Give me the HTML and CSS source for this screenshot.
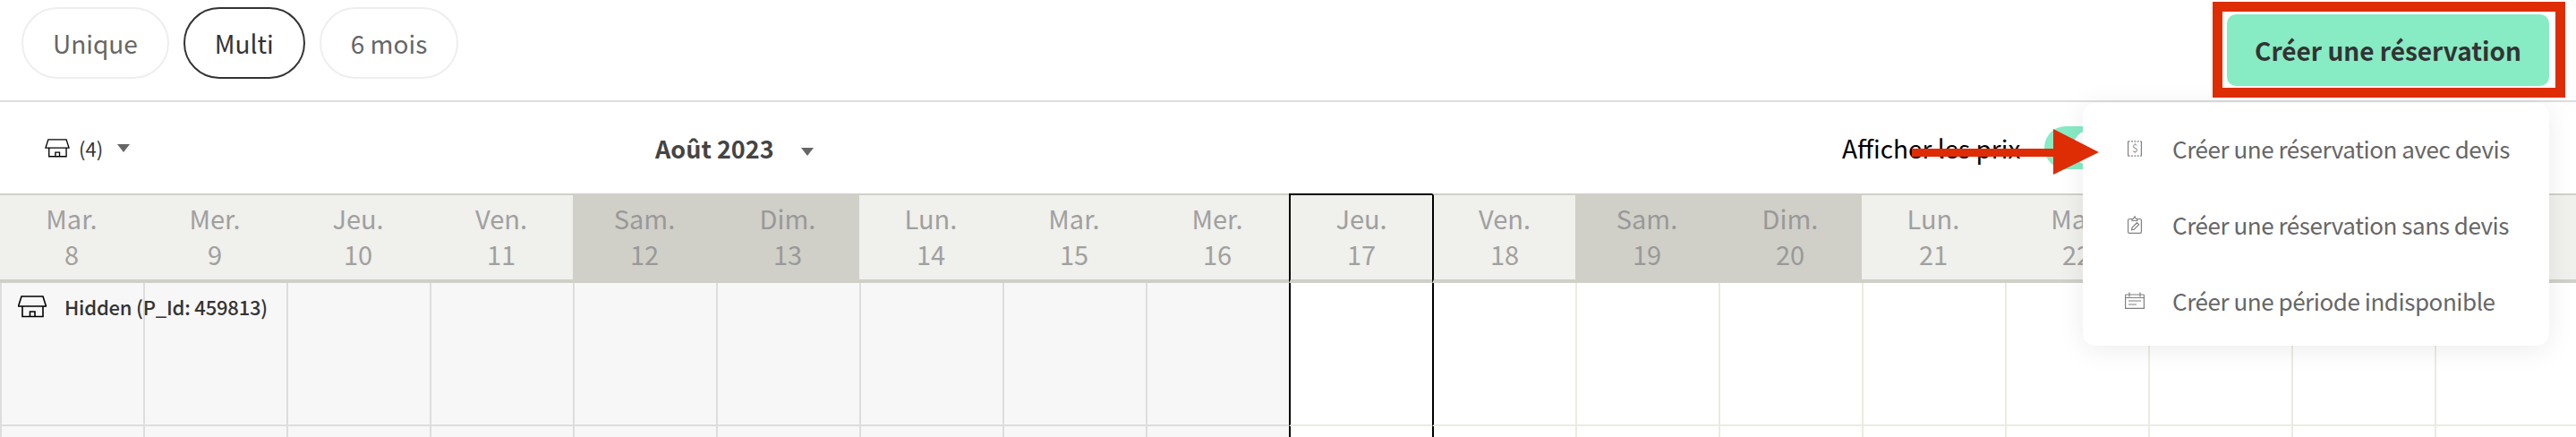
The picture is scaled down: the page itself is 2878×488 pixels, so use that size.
FILE: index.html
```html
<!DOCTYPE html>
<html lang="fr">
<head>
    <meta charset="UTF-8">
    <title>Planning</title>
    <link rel="stylesheet" href="styles.css">
</head>
<body>
    <div id="page">
        <div class="top-bar">
            <div class="pills">
                <span class="pill">Unique</span>
                <span class="pill active">Multi</span>
                <span class="pill">6 mois</span>
            </div>
            <button class="create-btn">Créer une réservation</button>
        </div>

        <div class="tool-bar">
            <div class="tool-left">
                <svg class="store-icon small" viewBox="0 0 32 25"><path d="M4 1h24l3.500 11H.5zM5 12v11.500h23V12M13.500 23.500V18H19v5.500"/></svg>
                <span class="count">(4)</span>
                <span class="caret"></span>
            </div>
            <div class="month">Août 2023<span class="caret"></span></div>
            <div class="prices">
                <span>Afficher les prix</span>
                <span class="toggle"><span class="knob"></span></span>
            </div>
        </div>

        <div class="days">
            <div class="day">Mar.<br>8</div>
            <div class="day">Mer.<br>9</div>
            <div class="day">Jeu.<br>10</div>
            <div class="day">Ven.<br>11</div>
            <div class="day weekend">Sam.<br>12</div>
            <div class="day weekend">Dim.<br>13</div>
            <div class="day">Lun.<br>14</div>
            <div class="day">Mar.<br>15</div>
            <div class="day">Mer.<br>16</div>
            <div class="day today">Jeu.<br>17</div>
            <div class="day after-today">Ven.<br>18</div>
            <div class="day weekend">Sam.<br>19</div>
            <div class="day weekend">Dim.<br>20</div>
            <div class="day">Lun.<br>21</div>
            <div class="day">Mar.<br>22</div>
            <div class="day">Mer.<br>23</div>
            <div class="day">Jeu.<br>24</div>
            <div class="day">Ven.<br>25</div>
        </div>

        <div class="row">
            <div class="cell past">
                <div class="place">
                    <svg class="store-icon" viewBox="0 0 32 25"><path d="M4 1h24l3.500 11H.5zM5 12v11.500h23V12M13.500 23.500V18H19v5.500"/></svg>
                    <span>Hidden (P_Id: 459813)</span>
                </div>
            </div>
            <div class="cell past"></div><div class="cell past"></div><div class="cell past"></div>
            <div class="cell past"></div><div class="cell past"></div><div class="cell past"></div>
            <div class="cell past"></div><div class="cell past"></div>
            <div class="cell today"></div><div class="cell after-today"></div>
            <div class="cell"></div><div class="cell"></div><div class="cell"></div>
            <div class="cell"></div><div class="cell"></div><div class="cell"></div><div class="cell"></div>
        </div>

        <div class="row">
            <div class="cell past"></div><div class="cell past"></div><div class="cell past"></div>
            <div class="cell past"></div><div class="cell past"></div><div class="cell past"></div>
            <div class="cell past"></div><div class="cell past"></div><div class="cell past"></div>
            <div class="cell today"></div><div class="cell after-today"></div>
            <div class="cell"></div><div class="cell"></div><div class="cell"></div>
            <div class="cell"></div><div class="cell"></div><div class="cell"></div><div class="cell"></div>
        </div>

        <div class="menu">
            <div class="menu-item">
                <span class="menu-icon">
                    <svg width="16" height="18" viewBox="0 0 16 18"><path class="dash" d="M.6 .8h14.800M.6 17.200h14.800"/><path d="M.6 .8v16.400M15.400 .8v16.400"/><text x="8" y="13" text-anchor="middle">$</text></svg>
                </span>
                Créer une réservation avec devis
            </div>
            <div class="menu-item">
                <span class="menu-icon">
                    <svg width="16" height="20" viewBox="0 0 16 20"><path d="M5 3.500H2Q.6 3.500 .6 4.900v13.200q0 1.300 1.400 1.300h12q1.400 0 1.400-1.300V4.900q0-1.400-1.400-1.400h-3M5 5.500v-2h1.500L8 .8l1.500 2.700H11v2zM4.500 15.800l.6-2.800 5.400-5.300 2.100 2.100-5.300 5.400z"/></svg>
                </span>
                Créer une réservation sans devis
            </div>
            <div class="menu-item">
                <span class="menu-icon">
                    <svg width="22" height="19" viewBox="0 0 22 19"><path d="M1.400 3h19.200q.8 0 .8.800v14.600H.6V3.800q0-.8.800-.8zM.6 6.500h20.800M5 .4v5M17 .4v5M4 10h14M4 14h9"/></svg>
                </span>
                Créer une période indisponible
            </div>
        </div>

        <!-- annotation -->
        <div class="red-frame"></div>
        <svg class="red-arrow" width="210" height="52" viewBox="0 0 210 52"><path d="M0 22h158V0l51 26-51 25V31H0z"/></svg>
    </div>
</body>
</html>
```

FILE: styles.css
```css
body {
    margin: 0;
    background: white;
    font-family: "Noto Sans CJK SC", "Noto Sans", sans-serif;
    color: #666;
}

#page {
    position: relative;
    width: 2878px;
    height: 488px;
    overflow: hidden;
}

.top-bar {
    display: flex;
    justify-content: space-between;
    height: 112px;
    padding: 8px 30px 0 24px;
    box-sizing: border-box;
}

.pills {
    display: flex;
    gap: 16px;
}

.pill {
    display: flex;
    align-items: center;
    height: 80px;
    padding: 0 33px;
    box-sizing: border-box;
    border: 2px solid #eee;
    border-radius: 40px;
    font-size: 28px;
    color: #666;
}

.pill.active {
    border-color: #333;
    color: #333;
}

.create-btn {
    width: 360px;
    height: 80px;
    margin-top: 8px;
    padding: 0;
    border: 0;
    border-radius: 10px;
    background: #87ebc4;
    font-family: inherit;
    font-size: 28px;
    font-weight: 600;
    color: #333;
}

.tool-bar {
    display: grid;
    grid-template-columns: 732px 1326px 1fr;
    align-items: center;
    height: 104px;
    box-sizing: border-box;
    border-top: 2px solid #ddd;
}

.tool-left {
    display: flex;
    align-items: center;
    padding-left: 50px;
}

.store-icon {
    width: 32px;
    height: 25px;
    flex: none;
    fill: none;
    stroke: black;
    stroke-width: 1.6;
}

.store-icon.small {
    width: 28px;
    height: 21px;
}

.count {
    margin-left: 10px;
    font-size: 22px;
    color: #333;
}

.caret {
    display: inline-block;
    margin-left: 16px;
    border-left: 7px solid transparent;
    border-right: 7px solid transparent;
    border-top: 9px solid #666;
}

.month {
    font-size: 27px;
    font-weight: 700;
    color: #444;
}

.month .caret {
    margin-left: 30px;
    vertical-align: middle;
}

.prices {
    display: flex;
    align-items: center;
    gap: 27px;
    font-size: 28px;
    color: black;
}

.toggle {
    display: flex;
    justify-content: flex-end;
    align-items: center;
    width: 76px;
    height: 48px;
    padding-right: 4px;
    box-sizing: border-box;
    border-radius: 24px;
    background: #87ebc4;
}

.knob {
    width: 40px;
    height: 40px;
    border-radius: 50%;
    background: white;
}

.days,
.row {
    display: grid;
    grid-template-columns: repeat(18, 160px);
}

.day {
    height: 100px;
    box-sizing: border-box;
    padding-top: 5px;
    border-top: 2px solid #d0d0c8;
    border-bottom: 4px solid #d0d0c8;
    background: #f0f0ec;
    font-size: 29px;
    line-height: 40px;
    text-align: center;
    color: #a0a0a0;
}

.day.weekend {
    background: #d0d0c8;
    color: #999;
}

.day.today {
    border-top-color: black;
    border-left: 2px solid black;
}

.day.after-today {
    border-left: 2px solid black;
}

.cell {
    height: 160px;
    box-sizing: border-box;
    border-left: 2px solid #ebebe0;
    border-bottom: 2px solid #ebebe0;
}

.cell.past {
    border-color: #ddd;
    background: #f7f7f7;
}

.cell.today,
.cell.after-today {
    border-left-color: black;
}

.place {
    position: relative;
    z-index: 1;
    display: flex;
    align-items: center;
    gap: 20px;
    width: 300px;
    padding: 10px 0 0 18px;
    font-size: 22px;
    font-weight: 500;
    letter-spacing: -0.2px;
    color: #333;
    white-space: nowrap;
}

.menu {
    position: absolute;
    z-index: 2;
    top: 115px;
    left: 2327px;
    width: 521px;
    height: 271px;
    box-sizing: border-box;
    padding-top: 8px;
    border-radius: 14px;
    background: white;
    box-shadow: 0 4px 30px rgba(0, 0, 0, 0.08);
}

.menu-item {
    display: flex;
    align-items: center;
    height: 85px;
    font-size: 26px;
    letter-spacing: -0.45px;
    color: #666;
    white-space: nowrap;
}

.menu-icon {
    display: flex;
    justify-content: center;
    width: 100px;
    padding-left: 15px;
    box-sizing: border-box;
}

.menu-icon svg {
    fill: none;
    stroke: #808080;
    stroke-width: 1.2;
}

.menu-icon .dash {
    stroke-dasharray: 2 1.4;
}

.menu-icon text {
    fill: #999;
    stroke: none;
    font-size: 12px;
}

.red-frame {
    position: absolute;
    z-index: 3;
    top: 2px;
    left: 2472px;
    width: 394px;
    height: 107px;
    box-sizing: border-box;
    border: 11px solid #de2c04;
}

.red-arrow {
    position: absolute;
    z-index: 3;
    top: 144px;
    left: 2136px;
    fill: #de2c04;
}
```
